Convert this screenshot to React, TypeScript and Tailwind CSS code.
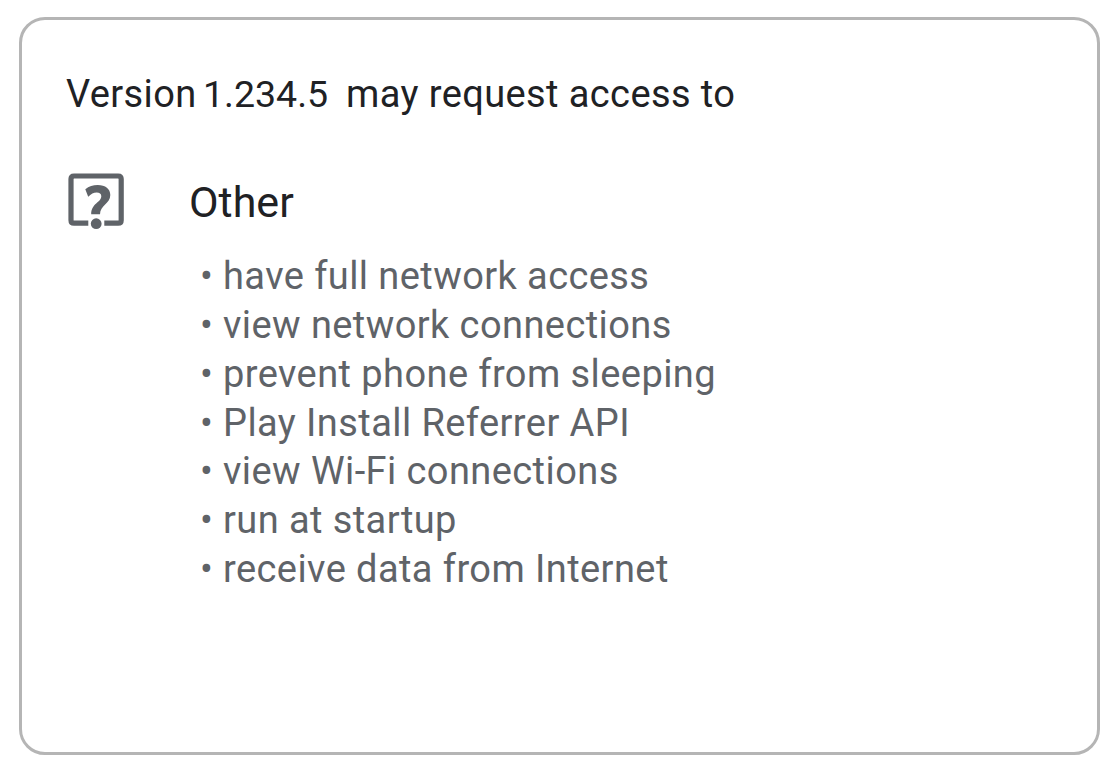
const permissions = [
  'have full network access',
  'view network connections',
  'prevent phone from sleeping',
  'Play Install Referrer API',
  'view Wi-Fi connections',
  'run at startup',
  'receive data from Internet',
];

function OtherIcon() {
  return (
    <svg className="ml-[2px] h-[57px] w-[57px] shrink-0" viewBox="0 0 57 57" fill="#5f6368">
      <path
        d="M20.3 50.2H6Q3 50.2 3 47.2V6Q3 3 6 3H50.2Q53.2 3 53.2 6V47.2Q53.2 50.2 50.2 50.2H36.3"
        fill="none"
        stroke="#5f6368"
        strokeWidth="5.2"
      />
      <path d="M17.3 16.2C21 13.4 25 12 29.7 12C37.5 12 42.3 15.9 42.3 22C42.3 31 32 32 32 41.3H23.2C23.2 30 33.3 29.5 33.3 23.2C33.3 20.6 31.5 19.4 28.7 19.4C25.6 19.4 23 20.8 20.2 23.7Z" />
      <circle cx="28.2" cy="50.7" r="5.4" />
    </svg>
  );
}

export default function App() {
  return (
    <div className="h-[773px] w-[1115px] bg-white pt-[17px] pl-[19px] font-['Roboto',sans-serif]">
      <main className="h-[738px] w-[1081px] rounded-[26px] border-[3px] border-[#b5b5b5] pt-[50px] pl-[44px]">
        <h1 className="flex h-[48px] items-center text-[38px] tracking-[0.4px] whitespace-pre text-[#202124]">
          <span className="w-[137px]">Version</span>
          <span className="w-[143px] pt-px text-[37.5px] tracking-normal">1.234.5</span>
          <span>may request access to</span>
        </h1>
        <section className="mt-[55px] flex">
          <OtherIcon />
          <div className="ml-[64px]">
            <h2 className="-mt-[3px] h-[64px] text-[43px] leading-[64px] text-[#202124]">Other</h2>
            <ul className="mt-[18.2px] ml-[11px] text-[38px] leading-[48.8px] tracking-[0.42px] text-[#5f6368]">
              {permissions.map((text) => (
                <li key={text} className="flex h-[48.8px] whitespace-nowrap">
                  <span className="w-[23px]">•</span>
                  <span>{text}</span>
                </li>
              ))}
            </ul>
          </div>
        </section>
      </main>
    </div>
  );
}
